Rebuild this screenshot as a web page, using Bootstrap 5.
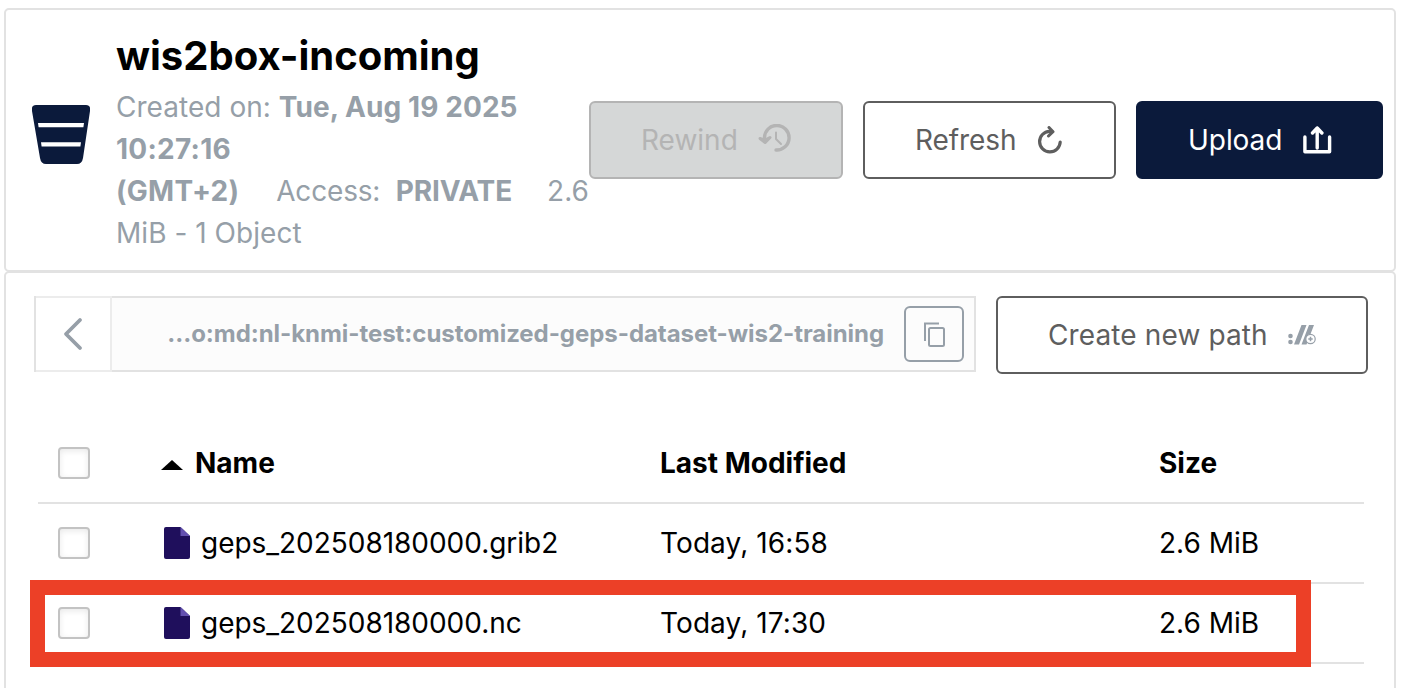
<!DOCTYPE html>
<html lang="en">
<head>
<meta charset="utf-8">
<meta name="viewport" content="width=device-width, initial-scale=1">
<title>wis2box-incoming</title>
<link href="https://cdn.jsdelivr.net/npm/bootstrap@5.3.0/dist/css/bootstrap.min.css" rel="stylesheet">
<style>
body{font-family:Inter,"Liberation Sans",sans-serif;font-size:28px;font-weight:400;line-height:42px;color:#000;background:#fff;height:688px;overflow:hidden}
b{font-weight:700}
.page{padding:8px 14px 0 4px}
.panel{border:2px solid #e2e2e2;border-radius:5px;background:#fff}
.bucket-head{height:264px;padding:0 11px 0 26px}
.bucket-info{width:473px;margin-left:26px;color:#969fa8;white-space:nowrap;padding-top:20px}
.bucket-info h1{font-size:40px;font-weight:700;line-height:52px;color:#000;margin:0 0 4px}
.bucket-info div{letter-spacing:.04px}
.bucket-info b{letter-spacing:.08px}
.bucket-info .gmt,.bucket-info .clock{letter-spacing:.25px}
.bucket-info .access{margin-left:37px;letter-spacing:-.18px}
.bucket-info .access b{letter-spacing:-.1px}
.bucket-icon{margin-top:95px}
.actions{gap:20px;margin-top:91px}
.action{--bs-btn-font-size:28px;--bs-btn-line-height:42px;--bs-btn-border-width:2px;--bs-btn-border-radius:6px;--bs-btn-color:#5e5e5e;--bs-btn-border-color:#5e5e5e;--bs-btn-padding-x:0;--bs-btn-padding-y:0;height:78px;font-weight:400;display:flex;align-items:center;justify-content:flex-start;white-space:nowrap}
.action span{flex:none;text-align:left}
.rewind{width:254px;padding-left:50px;--bs-btn-disabled-bg:#d5d7d7;--bs-btn-disabled-color:#b4b4b4;--bs-btn-disabled-border-color:#b4b4b4;--bs-btn-disabled-opacity:1}
.rewind span{width:96px}
.refresh{width:253px;padding-left:50px}
.refresh span{width:101px;letter-spacing:-.1px}
.upload{width:247px;padding-left:50px;--bs-btn-color:#fff;background:#0b1a3b;border-color:#0b1a3b}
.upload span{width:95px;letter-spacing:-.05px}
.browser{height:440px;padding:23px 26px 0 28px;margin-top:-1px}
.crumbs{width:942px;height:76px;border:2px solid #e2e2e2;background:#fcfcfc}
.back{width:76px;height:76px;margin:-2px 0;background:#fff;border:solid #ececec;border-width:2px 2px 2px 0}
.crumb-path{width:792px;text-align:right;padding-right:20px;font-size:24px;font-weight:700;letter-spacing:-.05px;color:#969fa8;white-space:nowrap}
.copy{width:60px;height:56px;border:2px solid #969fa8;border-radius:6px;background:#fcfcfc;padding:0}
.new-path{width:372px;margin-left:20px;padding-left:50px}
.new-path span{width:220px;letter-spacing:.12px}
.objects{margin:50px 2px 0 4px;width:1326px}
.object-row{height:80px;border-bottom:2px solid #e2e2e2;white-space:nowrap}
.object-row .tick{width:32px;height:32px;margin:0 72px 0 20px;border:2px solid #c3c3c3;border-radius:4px;box-shadow:inset 0 2px 6px rgba(0,0,0,.09);float:none;flex:none;background-color:#fff}
.name-col{width:498px;padding-left:2px}
.fname{margin-left:11px;letter-spacing:-.03px}
.date-col{width:499px}
.object-row:not(.heading) .date-col{letter-spacing:.1px}
.heading{font-weight:700}
.marker{left:30px;top:580px;width:1281px;height:87px;border:15px solid #ec4027;pointer-events:none}
svg{display:block;flex:none}
</style>
</head>
<body>
<main class="page">
  <header class="panel bucket-head d-flex align-items-start">
    <svg class="bucket-icon" width="58" height="59" viewBox="0 0 58 59"><path fill="#0b1a3b" d="M4 0h50q5 0 4 6l-7 47q-1 6-6 6H14q-5 0-6-6L0 6Q-1 0 4 0z"/><path fill="#fff" d="M6 18h46l-.6 4.300H6.600zM9 37.300h40l-.6 4.200H9.600z"/></svg>
    <div class="bucket-info">
      <h1>wis2box-incoming</h1>
      <div>Created on: <b>Tue, Aug 19 2025</b></div>
      <div><b class="clock">10:27:16</b></div>
      <div class="d-flex"><b class="gmt">(GMT+2)</b><span class="access">Access: &nbsp;<b>PRIVATE</b></span><span class="ms-auto">2.6</span></div>
      <div>MiB - 1 Object</div>
    </div>
    <div class="actions d-flex">
      <button class="btn action rewind" disabled><span>Rewind</span>
        <svg width="33" height="28" viewBox="0 0 33 28" style="margin-left:21px;margin-top:-5px" fill="none" stroke="currentColor" stroke-linecap="round" stroke-linejoin="round"><path stroke-width="3.400" d="M6.500 17V14A12.300 12.300 0 1 1 18 26"/><path stroke-width="3" fill="currentColor" d="M2 14.500l5.200 4L12 13.500L7 16z"/><path stroke-width="2" d="M18 8.500v6.500l5 5"/></svg>
      </button>
      <button class="btn action refresh"><span>Refresh</span>
        <svg width="26" height="28" viewBox="0 0 26 28" style="margin-left:21px" fill="none" stroke="currentColor" stroke-linecap="round" stroke-linejoin="round"><path stroke-width="3.200" d="M15 5.300H12.500A10.300 10.300 0 1 0 23.200 16"/><path stroke-width="3" d="M12 1.500l4 4.200L11.500 10"/></svg>
      </button>
      <button class="btn action upload"><span>Upload</span>
        <svg width="29" height="28" viewBox="0 0 29 28" style="margin-left:20px" fill="none" stroke="currentColor" stroke-linecap="round" stroke-linejoin="round"><path stroke-width="3.400" d="M1.900 11v14.700h24.700V11"/><path stroke-width="3.400" d="M14.200 2v20M9.500 7l4.700-5 4.700 5"/></svg>
      </button>
    </div>
  </header>
  <section class="panel browser">
    <div class="d-flex align-items-start">
      <div class="crumbs d-flex align-items-center">
        <div class="back d-flex align-items-center justify-content-center"><svg width="20" height="34" viewBox="0 0 20 34" fill="none" stroke="#969fa8" stroke-width="3.800" stroke-linecap="round" stroke-linejoin="round"><path d="M17 3L3 17l14 14"/></svg></div>
        <div class="crumb-path">…o:md:nl-knmi-test:customized-geps-dataset-wis2-training</div>
        <button class="copy d-flex align-items-center justify-content-center" aria-label="Copy path"><svg width="22" height="25" viewBox="0 0 22 25" style="margin-top:1px" fill="none" stroke="#969fa8" stroke-width="2"><path d="M2 19V1.500h14"/><rect x="6" y="6" width="15" height="18" rx="1.500"/></svg></button>
      </div>
      <button class="btn action new-path"><span>Create new path</span>
        <svg width="28" height="20" viewBox="0 0 28 20" style="margin-left:20px" fill="#969fa8"><circle cx="2.500" cy="11" r="2.300"/><circle cx="2.500" cy="17" r="2.300"/><path d="M13.500 0h5L11 19.500H6zM21 0h5l-7.500 19.500h-5z"/><circle cx="22.500" cy="14" r="4.700" fill="#fff" stroke="#969fa8" stroke-width="1.200"/><path d="M22.500 11.800v4.400M20.300 14h4.400" stroke="#969fa8" stroke-width="1.500"/></svg>
      </button>
    </div>
    <div class="objects">
      <div class="object-row heading d-flex align-items-center"><input class="form-check-input tick" type="checkbox" aria-label="Select all"><div class="name-col d-flex align-items-center" style="padding-left:0"><svg width="22" height="10" viewBox="0 0 21 10" preserveAspectRatio="none" style="margin-top:4px;margin-right:12px;margin-left:-1px"><path d="M10.500 0L21 10H0z"/></svg>Name</div><div class="date-col">Last Modified</div><div>Size</div></div>
      <div class="object-row d-flex align-items-center"><input class="form-check-input tick" type="checkbox" aria-label="Select file"><div class="name-col d-flex align-items-center"><svg class="doc" width="26" height="32" viewBox="0 0 26 32"><path fill="#1f0f5c" d="M2 0h14.500L26 9v21q0 2-2 2H2q-2 0-2-2V2Q0 0 2 0z"/><path fill="#6350b0" d="M16.500 0L26 9h-9.500z"/></svg><span class="fname">geps_202508180000.grib2</span></div><div class="date-col">Today, 16:58</div><div>2.6 MiB</div></div>
      <div class="object-row d-flex align-items-center"><input class="form-check-input tick" type="checkbox" aria-label="Select file"><div class="name-col d-flex align-items-center"><svg class="doc" width="26" height="32" viewBox="0 0 26 32"><path fill="#1f0f5c" d="M2 0h14.500L26 9v21q0 2-2 2H2q-2 0-2-2V2Q0 0 2 0z"/><path fill="#6350b0" d="M16.500 0L26 9h-9.500z"/></svg><span class="fname">geps_202508180000.nc</span></div><div class="date-col">Today, 17:30</div><div>2.6 MiB</div></div>
    </div>
  </section>
</main>
<div class="marker position-absolute"></div>
<script src="https://cdn.jsdelivr.net/npm/bootstrap@5.3.0/dist/js/bootstrap.bundle.min.js"></script>
</body>
</html>
